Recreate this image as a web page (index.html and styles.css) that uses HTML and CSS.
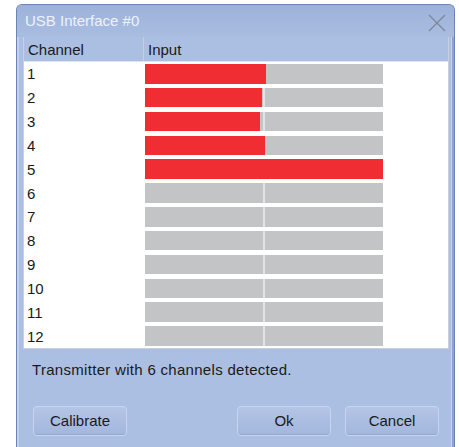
FILE: index.html
```html
<!DOCTYPE html>
<html>
<head>
<meta charset="utf-8">
<title>USB Interface #0</title>
<link rel="stylesheet" href="styles.css">
</head>
<body>
<div class="window">
  <div class="titlebar">
    <span class="title">USB Interface #0</span>
    <svg class="close" width="18" height="18" viewBox="0 0 18 18">
      <path d="M1 1 L17 17 M17 1 L1 17" stroke="#7d8598" stroke-width="1.2" fill="none"/>
    </svg>
  </div>
  <div class="content">
    <div class="table">
      <div class="thead">
        <div class="th th-channel">Channel</div>
        <div class="th th-input">Input</div>
      </div>
      <div class="tbody">
        <div class="row"><span class="ch">1</span><div class="bar"><div class="fill" style="width:51%"></div></div></div>
        <div class="row"><span class="ch">2</span><div class="bar"><div class="fill" style="width:49%"></div></div></div>
        <div class="row"><span class="ch">3</span><div class="bar"><div class="fill" style="width:48.5%"></div></div></div>
        <div class="row"><span class="ch">4</span><div class="bar"><div class="fill" style="width:50.5%"></div></div></div>
        <div class="row"><span class="ch">5</span><div class="bar"><div class="fill" style="width:100%"></div></div></div>
        <div class="row"><span class="ch">6</span><div class="bar"></div></div>
        <div class="row"><span class="ch">7</span><div class="bar"></div></div>
        <div class="row"><span class="ch">8</span><div class="bar"></div></div>
        <div class="row"><span class="ch">9</span><div class="bar"></div></div>
        <div class="row"><span class="ch">10</span><div class="bar"></div></div>
        <div class="row"><span class="ch">11</span><div class="bar"></div></div>
        <div class="row"><span class="ch">12</span><div class="bar"></div></div>
      </div>
    </div>
    <p class="status">Transmitter with 6 channels detected.</p>
    <div class="buttons">
      <button class="btn">Calibrate</button>
      <span class="spacer"></span>
      <button class="btn">Ok</button>
      <button class="btn">Cancel</button>
    </div>
  </div>
</div>
</body>
</html>
```

FILE: styles.css
```css
html, body {
  margin: 0;
  padding: 0;
  background: #ffffff;
}

body {
  font-family: "Liberation Sans", Arial, sans-serif;
  font-size: 15px;
  color: #1a1a1a;
}

.window {
  margin: 4px 0 0 16px;
  width: 439px;
  height: 460px;
  box-sizing: border-box;
  background: #abbfe2;
  border: 1px solid #6b86b6;
  border-bottom: none;
  border-radius: 6px 6px 0 0;
  box-shadow: inset -2px 0 0 #8da4cf, inset -3px 0 0 #c4d2ec, inset 2px 0 0 #c2d0eb;
  display: flex;
  flex-direction: column;
}

.titlebar {
  height: 32px;
  display: flex;
  align-items: center;
  justify-content: space-between;
  padding: 0 8px 0 8px;
  background: linear-gradient(#9db2da, #a9bde1);
  border-radius: 5px 5px 0 0;
}

.title {
  color: #eef2fa;
  font-size: 15px;
  margin-top: -2px;
}

.close {
  margin-top: 4px;
}

.content {
  padding: 0 5px 0 6px;
  display: flex;
  flex-direction: column;
}

.table {
  border: 1px solid #c9d0dc;
  border-top: none;
  background: #ffffff;
}

.thead {
  display: flex;
  height: 24px;
  background: #abbfe2;
  border-bottom: 1px solid #dfe6f3;
}

.th {
  display: flex;
  align-items: center;
  padding-left: 4px;
}

.th-channel {
  width: 115px;
  border-right: 1px solid #c8cfdc;
}

.th-input {
  flex: 1;
}

.tbody {
  display: flex;
  flex-direction: column;
}

.row {
  height: 23.83px;
  display: flex;
  align-items: center;
}

.ch {
  width: 120px;
  padding-left: 3px;
  box-sizing: border-box;
}

.bar {
  width: 238px;
  height: 19.5px;
  margin-left: 1px;
  background: linear-gradient(90deg, #c3c4c6 0, #c3c4c6 49.6%, #e2e3e5 49.6%, #e2e3e5 50.4%, #c3c4c6 50.4%);
  position: relative;
}

.fill {
  position: absolute;
  left: 0;
  top: 0;
  bottom: 0;
  background: #ef2d32;
}

.status {
  margin: 12px 0 0 9px;
  line-height: 17px;
  letter-spacing: 0.3px;
}

.buttons {
  display: flex;
  margin-top: 28px;
  padding: 0 10px 0 10px;
  gap: 14px;
}

.spacer {
  flex: 1;
}

.btn {
  width: 94px;
  height: 30px;
  font-family: "Liberation Sans", Arial, sans-serif;
  font-size: 15px;
  color: #1a1a1a;
  background: linear-gradient(#b4c5e6, #a3b6dc);
  border: 1px solid #c8d5ee;
  border-radius: 4px;
  box-shadow: inset 0 -1px 0 #90a5cf;
  padding: 0;
}
```
